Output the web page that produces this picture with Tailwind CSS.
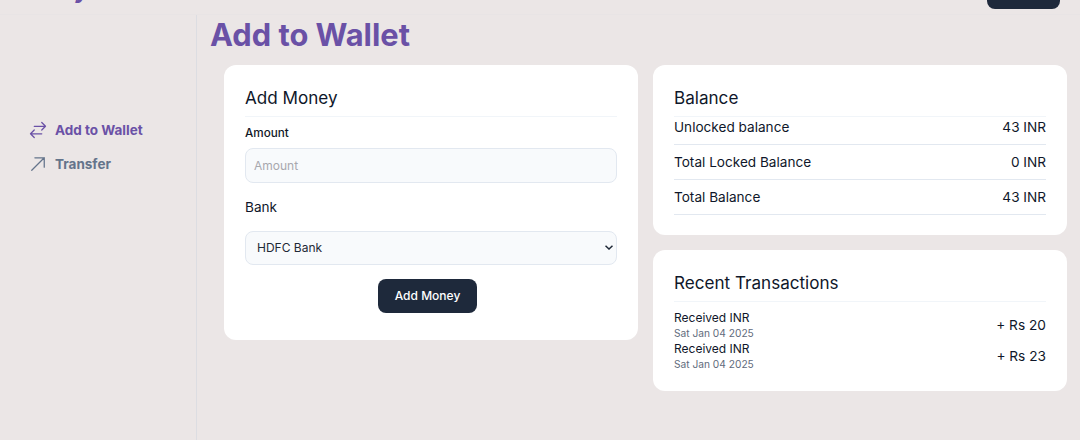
<!DOCTYPE html>
<html lang="en">
  <head>
    <meta charset="UTF-8" />
    <title>Add to Wallet</title>
    <script src="https://cdn.jsdelivr.net/npm/@tailwindcss/browser@4"></script>
  </head>
  <body class="h-[440px] overflow-hidden bg-[#ebe6e6] font-['Inter',sans-serif] text-[#0f172a]">
    <!-- Navbar, scrolled mostly out of view -->
    <nav class="flex h-[15px] items-end justify-between overflow-hidden border-b border-[#e8e4e5] pr-[20px] pl-[45px]">
      <div class="mb-[8px] text-2xl leading-8 font-bold text-[#6a51a6]">PayTM</div>
      <div class="mb-[5px] h-[40px] w-[73px] rounded-lg bg-[#1e293b]"></div>
    </nav>

    <div class="flex h-[425px]">
      <!-- Sidebar -->
      <aside class="w-[197px] shrink-0 border-r border-[#dcdde2] pt-[98px]">
        <a href="#" class="flex h-[34px] items-center gap-[7px] pl-[28px] font-bold text-[#6a51a6]">
          <svg class="h-5 w-5" viewBox="0 0 24 24" fill="none" stroke="currentColor" stroke-width="1.5" stroke-linecap="round" stroke-linejoin="round">
            <path d="M7.5 21 3 16.5m0 0L7.5 12M3 16.5h13.5m0-13.5L21 7.5m0 0L16.5 12M21 7.5H7.5" />
          </svg>
          <span class="text-[13.5px]">Add to Wallet</span>
        </a>
        <a href="#" class="flex h-[34px] items-center gap-[7px] pl-[28px] font-bold text-[#64748b]">
          <svg class="h-5 w-5" viewBox="0 0 24 24" fill="none" stroke="currentColor" stroke-width="1.5" stroke-linecap="round" stroke-linejoin="round">
            <path d="m4.5 19.5 15-15m0 0H8.25m11.25 0v11.25" />
          </svg>
          <span class="text-[13.5px]">Transfer</span>
        </a>
      </aside>

      <!-- Main content -->
      <main class="min-w-0 flex-1">
        <h1 class="mt-[2px] pl-[13px] text-[30.8px] leading-[36px] font-bold text-[#6a51a6]">Add to Wallet</h1>

        <div class="mt-[12px] grid grid-cols-[414px_414px] gap-[15px] pl-[27px]">
          <!-- Add Money card -->
          <section class="h-[275px] rounded-xl bg-white px-[21px] pt-[20px]">
            <h2 class="border-b border-[#f1f5f9] pb-[6px] text-[17.1px] leading-[25px]">Add Money</h2>
            <label class="mt-[8px] block text-[11.7px] leading-[16px] font-medium text-[#111827]">Amount</label>
            <input type="text" placeholder="Amount" class="mt-[7px] block h-[35px] w-full rounded-lg border border-[#e2e8f0] bg-[#f8fafc] px-[8px] text-xs placeholder:text-[#a8a8ae]" />
            <div class="mt-[14px] text-[13.6px] leading-[20px]">Bank</div>
            <div class="relative mt-[14px]">
              <select class="block h-[34px] w-full appearance-none rounded-lg border border-[#e2e8f0] bg-[#f8fafc] px-[11px] text-xs text-[#1f2937]">
                <option>HDFC Bank</option>
                <option>Axis Bank</option>
              </select>
              <svg class="pointer-events-none absolute top-[14px] right-[4px] h-[5px] w-[8px]" viewBox="0 0 8 5" fill="none" stroke="#1f2937" stroke-width="1.5">
                <path d="M.5.7 4 4 7.5.7" />
              </svg>
            </div>
            <div class="mt-[14px] ml-[133px]">
              <button class="h-[34px] w-[99px] rounded-lg bg-[#1e293b] text-xs font-medium text-white">Add Money</button>
            </div>
          </section>

          <div class="flex flex-col gap-[15px]">
            <!-- Balance card -->
            <section class="h-[170px] rounded-xl bg-white px-[21px] pt-[20px]">
              <h2 class="border-b border-[#f1f5f9] pb-[6px] text-[17.1px] leading-[25px]">Balance</h2>
              <div class="flex h-[28px] items-start justify-between border-b border-[#e2e8f0] text-[13.6px] leading-[20px]">
                <span>Unlocked balance</span><span>43 INR</span>
              </div>
              <div class="flex h-[35px] items-center justify-between border-b border-[#e2e8f0] text-[13.6px] leading-[20px]">
                <span>Total Locked Balance</span><span>0 INR</span>
              </div>
              <div class="flex h-[35px] items-center justify-between border-b border-[#e2e8f0] text-[13.6px] leading-[20px]">
                <span>Total Balance</span><span>43 INR</span>
              </div>
            </section>

            <!-- Recent transactions card -->
            <section class="h-[141px] rounded-xl bg-white px-[21px] pt-[20px]">
              <h2 class="border-b border-[#f1f5f9] pb-[6px] text-[17.1px] leading-[25px]">Recent Transactions</h2>
              <div class="mt-[8px] flex items-center justify-between">
                <div>
                  <div class="text-xs leading-[15px]">Received INR</div>
                  <div class="text-[10.2px] leading-[16px] text-[#5f6b7c]">Sat Jan 04 2025</div>
                </div>
                <div class="text-[13.7px]">+ Rs 20</div>
              </div>
              <div class="flex items-center justify-between">
                <div>
                  <div class="text-xs leading-[15px]">Received INR</div>
                  <div class="text-[10.2px] leading-[16px] text-[#5f6b7c]">Sat Jan 04 2025</div>
                </div>
                <div class="text-[13.7px]">+ Rs 23</div>
              </div>
            </section>
          </div>
        </div>
      </main>
    </div>
  </body>
</html>
